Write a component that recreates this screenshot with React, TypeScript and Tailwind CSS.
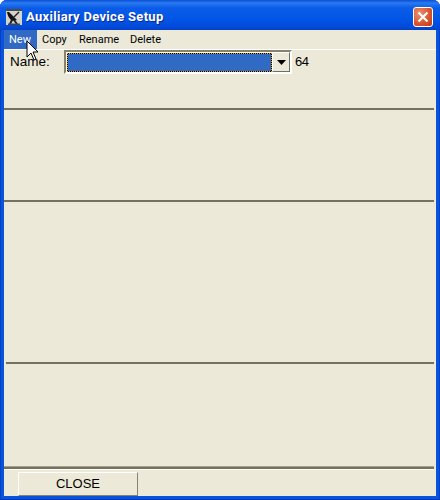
export default function App() {
  return (
    <div className="relative w-[440px] h-[500px] overflow-hidden rounded-t-[7px] bg-[#0855dd] shadow-[inset_1px_0_0_#0a3cc4,inset_-1px_0_0_#0a3cc4,inset_0_-1px_0_#0a34b8] flex flex-col font-['Liberation_Sans',sans-serif] text-black">
      <div className="h-[30px] shrink-0 flex items-center pt-[3px] pl-[6px] pr-[7px] bg-[linear-gradient(to_bottom,#0a4fd8_0px,#2a7af0_3px,#0a5ce8_8px,#0254e6_20px,#0249d8_27px,#0340c4_30px)]">
        <svg width="16" height="16" viewBox="0 0 16 16" className="shrink-0">
          <rect width="16" height="16" fill="#d4d4cc" />
          <path d="M0 0h16v2H0z" fill="#4a4a4a" />
          <path d="M1 3 L3 3 L11 11 L6 12 Q2 9 1 3 Z" fill="#141414" />
          <path d="M8 8 L13 3" stroke="#222" strokeWidth="1.5" />
          <path d="M6 11 L4 15 M8 11 L11 15" stroke="#222" strokeWidth="2" />
          <path d="M2 14.5h12v1.5H2z" fill="#444" />
        </svg>
        <span className="ml-[4px] text-white font-bold text-[13px] font-['Roboto',sans-serif] tracking-[0.3px] [text-shadow:1px_1px_0_#0a2a90]">Auxiliary Device Setup</span>
        <button className="ml-auto w-[20px] h-[20px] rounded-[3px] border border-white bg-[radial-gradient(circle_at_30%_30%,#e8906e,#d9532a_60%,#c03a14)] flex items-center justify-center">
          <svg width="12" height="12" viewBox="0 0 12 12">
            <path d="M1.5 1.5 L10.5 10.5 M10.5 1.5 L1.5 10.5" stroke="#fff" strokeWidth="2.2" />
          </svg>
        </button>
      </div>
      <div className="flex-1 min-h-0 ml-[4px] mr-[4px] mb-[4px] bg-[#ece9d8] flex flex-col">
        <div className="h-[20px] shrink-0 flex items-stretch border-b border-white text-[11px] font-['Roboto',sans-serif]">
          <div className="w-[33px] flex items-center pl-[5px] pt-[1px] bg-[#316ac5] text-white">New</div>
          <div className="flex items-center pl-[5px] pt-[1px] w-[37px]">Copy</div>
          <div className="flex items-center pl-[5px] pt-[1px] w-[51px]">Rename</div>
          <div className="flex items-center pl-[5px] pt-[1px]">Delete</div>
        </div>
        <div className="h-[60px] shrink-0 mr-[2px] border-b-[2px] border-[#75715f] flex items-start">
          <span className="ml-[6px] mt-[2px] w-[54px] text-[13.5px] leading-[20px]">Name:</span>
          <div className="flex h-[24px] w-[228px] border-2 border-t-[#85826f] border-l-[#85826f] border-r-white border-b-white">
            <div className="flex-1 flex h-[20px] border border-white border-r-0 border-b-0 bg-white">
              <div className="flex-1 h-[19px] flex bg-black border border-dotted border-[#f0a020]">
                <div className="flex-1 bg-[#316ac5]" />
              </div>
            </div>
            <div className="w-[18px] h-[20px] bg-[#ece9d8] border border-t-white border-l-white border-r-[#716f64] border-b-[#716f64] flex items-center justify-center">
              <svg width="9" height="5" viewBox="0 0 9 5"><path d="M0 0h9L4.5 5z" fill="#000" /></svg>
            </div>
          </div>
          <span className="ml-[3px] mt-[2px] text-[13px] tracking-[-0.5px] leading-[20px]">64</span>
        </div>
        <div className="h-[92px] shrink-0 mr-[2px] border-b-[2px] border-[#75715f]" />
        <div className="h-[162px] shrink-0 ml-[2px] mr-[2px] border-b-[2px] border-[#75715f]" />
        <div className="h-[102px] shrink-0" />
        <div className="h-[1px] shrink-0 mr-[2px] bg-[#a5a18e]" />
        <div className="h-[2px] shrink-0 mr-[2px] bg-[#75715f]" />
        <div className="h-[1px] shrink-0 mr-[2px] bg-white" />
        <div className="flex-1 min-h-0 pl-[14px] pt-[2px]">
          <button className="block w-[120px] h-[24px] bg-[#ece9d8] border border-t-white border-l-white border-r-[#85826f] border-b-[#85826f] text-[13px]">CLOSE</button>
        </div>
      </div>
      <svg width="13" height="21" viewBox="0 0 13 21" className="absolute left-[26px] top-[40px]">
        <path d="M1 1v16l4-4 3 7 2-1-3-7h5z" fill="#fff" stroke="#000" strokeWidth="1" />
      </svg>
    </div>
  );
}
